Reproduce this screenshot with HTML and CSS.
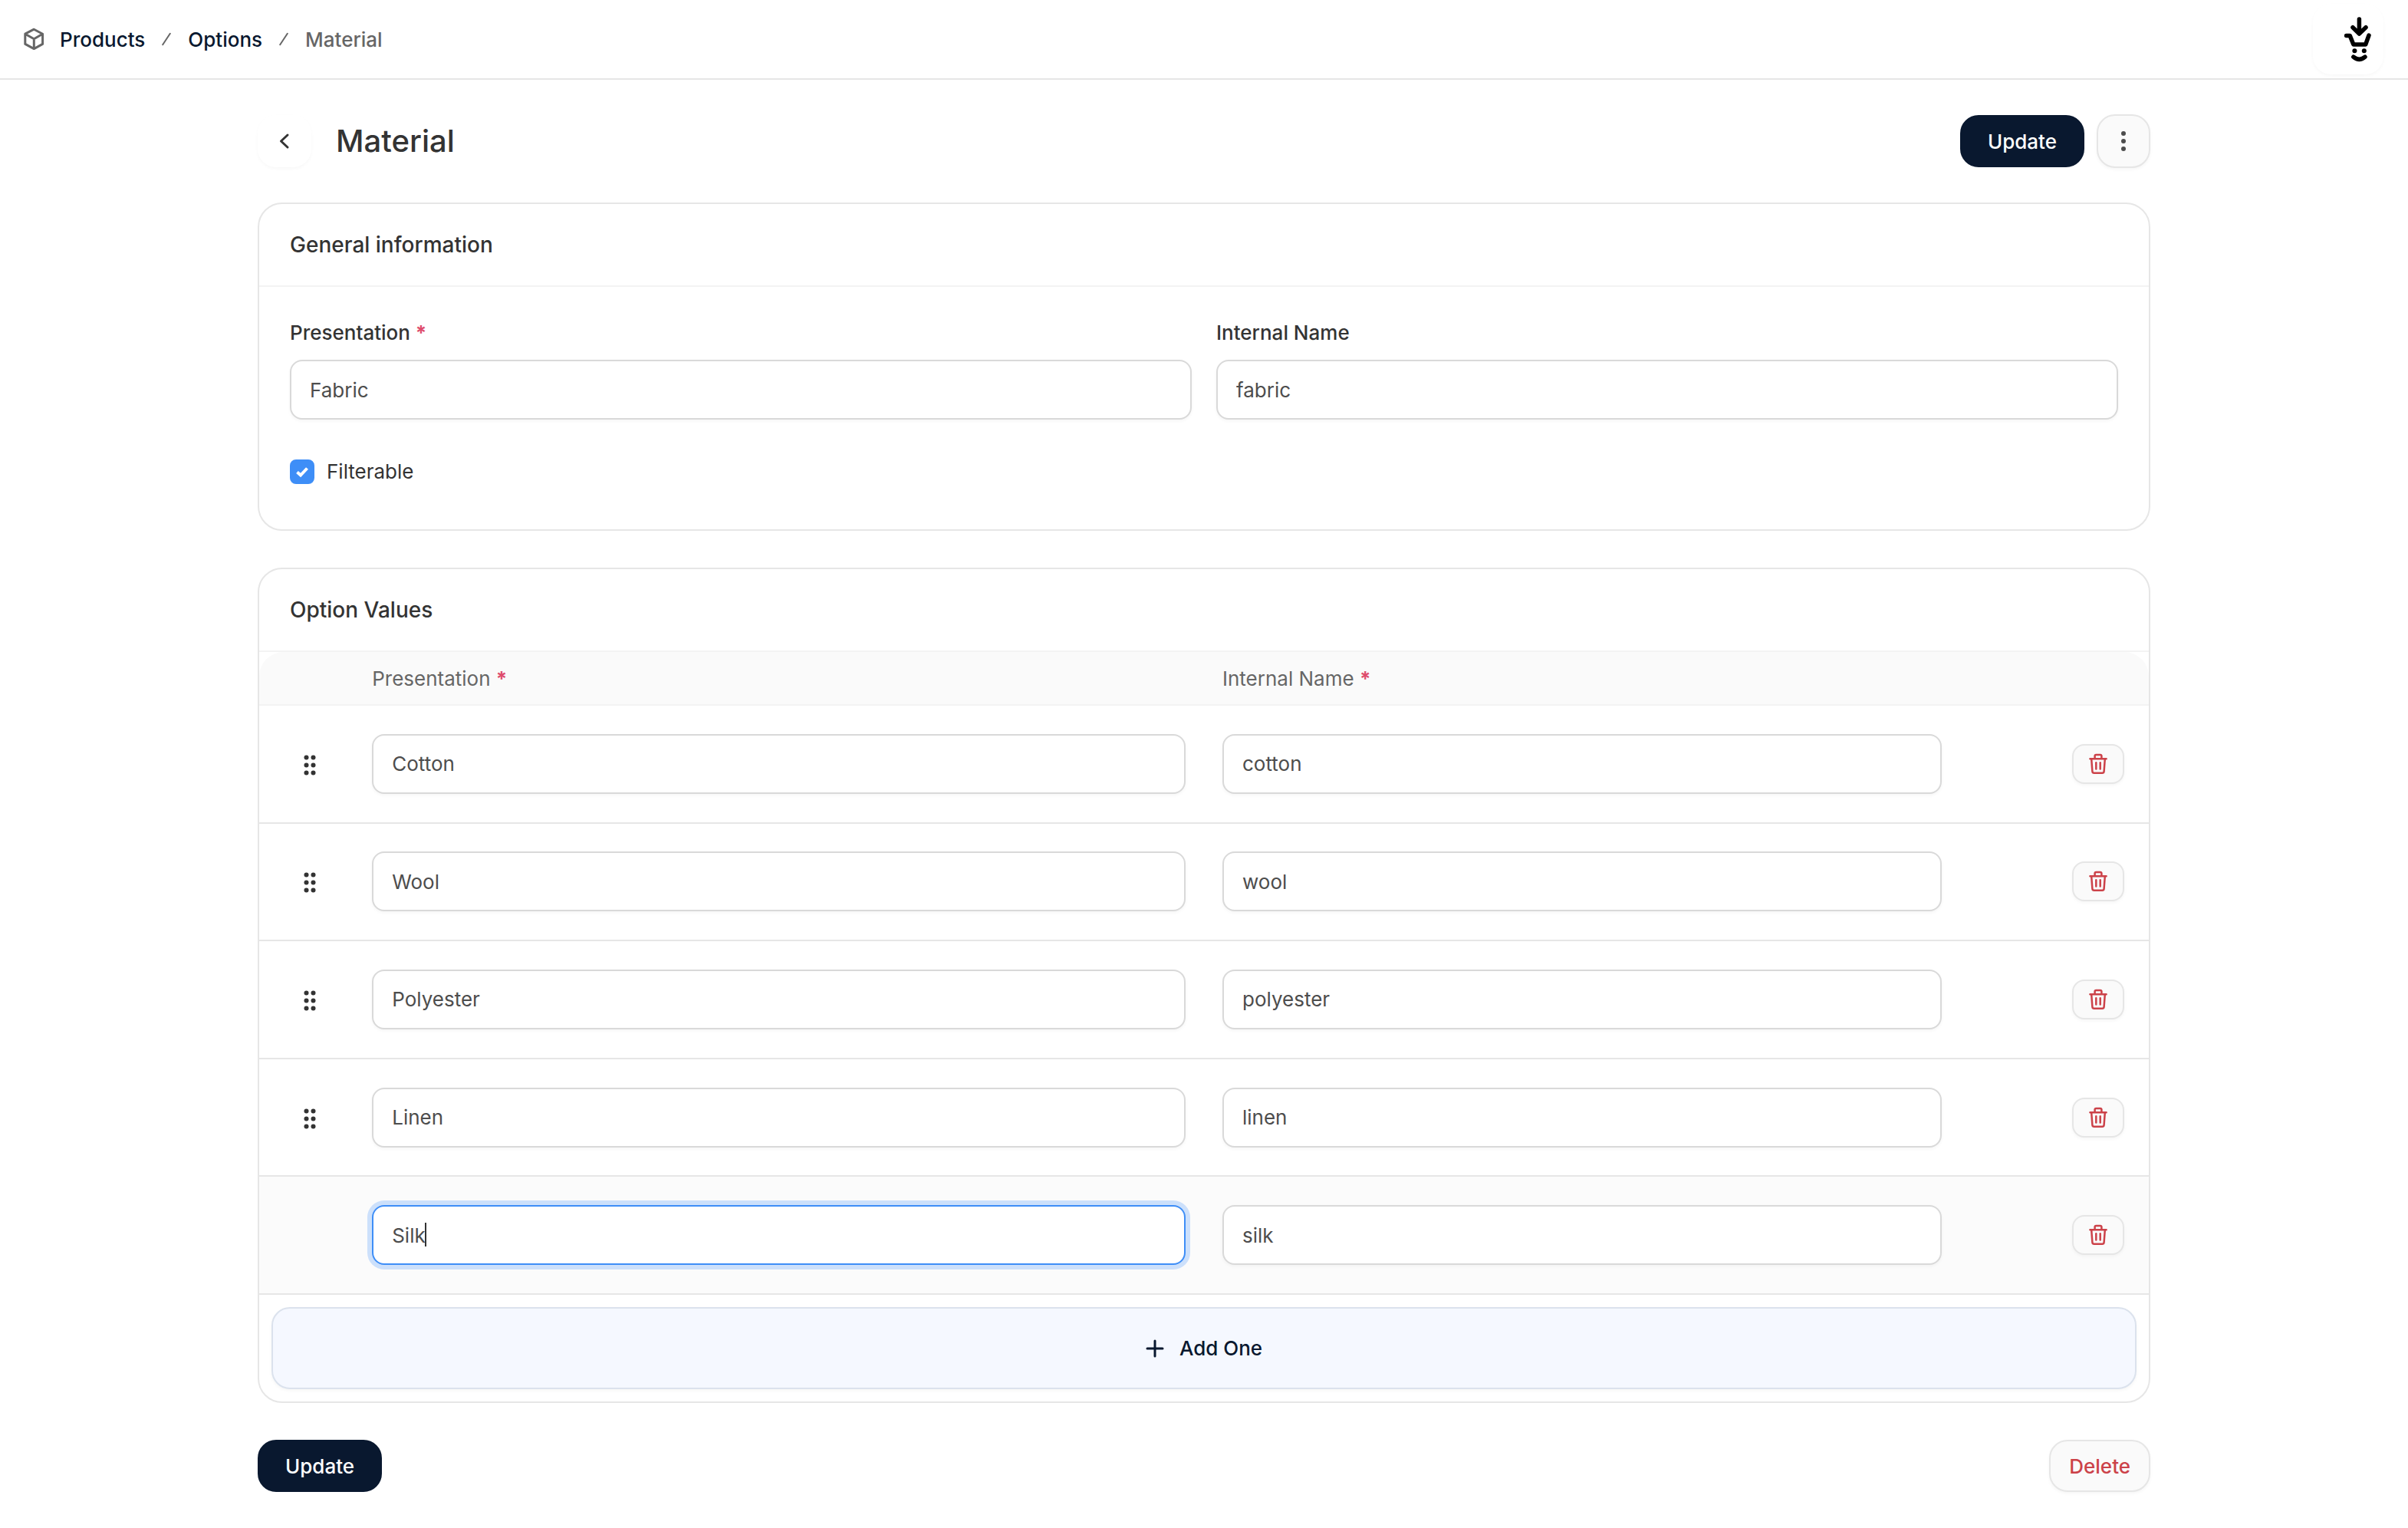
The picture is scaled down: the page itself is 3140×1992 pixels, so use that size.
FILE: index.html
```
<!DOCTYPE html>
<html lang="en">
<head>
  <meta charset="UTF-8" />
  <meta name="viewport" content="width=device-width, initial-scale=1.0" />
  <title>Material</title>
  <link rel="stylesheet" href="styles.css">
</head>
<body>
  <!-- shared icons -->
  <svg class="sprite" aria-hidden="true">
    <symbol id="icon-slash" viewBox="0 0 12 18">
      <path d="M1.2 16.2L10.8 1.8" />
    </symbol>
    <symbol id="icon-grip" viewBox="0 0 36 36">
      <circle cx="13.5" cy="9.5" r="3" /><circle cx="22.5" cy="9.5" r="3" />
      <circle cx="13.5" cy="19.5" r="3" /><circle cx="22.5" cy="19.5" r="3" />
      <circle cx="13.5" cy="29.5" r="3" /><circle cx="22.5" cy="29.5" r="3" />
    </symbol>
    <symbol id="icon-trash" viewBox="0 0 24 28">
      <path d="M1.4 7.3H22.6M7.6 7V3.6Q7.6 1.9 9.3 1.9H14.7Q16.4 1.9 16.4 3.6V7M3.2 7.5L4.4 23.6Q4.6 25.7 6.7 25.7H17.3Q19.4 25.7 19.6 23.6L20.8 7.5M9.3 12.2V20.4M14.7 12.2V20.4" />
    </symbol>
  </svg>

  <header class="topbar">
    <nav class="breadcrumbs" aria-label="Breadcrumb">
      <svg class="icon-box" width="28" height="30" viewBox="0 0 28 30">
        <path d="M14.3 2.2L25.6 8.2V21.4L14.3 27.6L2.8 21.4V8.2ZM2.8 8.2L14.3 14.8L25.6 8.2M14.3 14.8V27.6" />
      </svg>
      <a href="#">Products</a>
      <svg class="icon-slash" width="12" height="18"><use href="#icon-slash" /></svg>
      <a href="#">Options</a>
      <svg class="icon-slash" width="12" height="18"><use href="#icon-slash" /></svg>
      <span>Material</span>
    </nav>
    <button type="button" class="account" aria-label="Account">
      <svg width="40" height="60" viewBox="0 0 40 60">
        <path d="M20.4 4V22M12 14.7L20.4 23L29 14.7M3.6 25.4H8.2L12.9 37H28.7L33 25M12.8 53.2Q20.4 59.6 28 53.2" />
        <circle cx="14.4" cy="45.3" r="3" />
        <circle cx="26.8" cy="45.3" r="3" />
      </svg>
    </button>
  </header>

  <main class="container">
    <div class="page-header">
      <a href="#" class="back" aria-label="Back">
        <svg width="16" height="22" viewBox="0 0 16 22"><path d="M12 3L3.5 11L12 19" /></svg>
      </a>
      <h1>Material</h1>
      <button type="submit" form="option-form" class="btn btn-primary">Update</button>
      <button type="button" class="btn btn-light btn-more" aria-label="More actions">
        <svg width="8" height="28" viewBox="0 0 8 28">
          <circle cx="4" cy="4" r="3" /><circle cx="4" cy="14" r="3" /><circle cx="4" cy="24" r="3" />
        </svg>
      </button>
    </div>

    <form id="option-form">
      <section class="card">
        <h2 class="card-header">General information</h2>
        <div class="card-body">
          <div class="fields">
            <div class="field">
              <label for="presentation">Presentation <span class="required">*</span></label>
              <input type="text" id="presentation" class="input" value="Fabric" />
            </div>
            <div class="field">
              <label for="name">Internal Name</label>
              <input type="text" id="name" class="input" value="fabric" />
            </div>
          </div>
          <div class="check">
            <input type="checkbox" id="filterable" checked />
            <label for="filterable">Filterable</label>
          </div>
        </div>
      </section>

      <section class="card">
        <h2 class="card-header">Option Values</h2>
        <table class="values">
          <thead>
            <tr>
              <th class="col-handle"></th>
              <th class="col-presentation">Presentation <span class="required">*</span></th>
              <th class="col-name">Internal Name <span class="required">*</span></th>
              <th class="col-actions"></th>
            </tr>
          </thead>
          <tbody>
            <tr>
              <td class="handle"><svg width="36" height="36"><use href="#icon-grip" /></svg></td>
              <td><input type="text" class="input" value="Cotton" aria-label="Presentation" /></td>
              <td><input type="text" class="input" value="cotton" aria-label="Internal Name" /></td>
              <td class="actions"><button type="button" class="btn btn-light btn-trash" aria-label="Remove"><svg width="24" height="28"><use href="#icon-trash" /></svg></button></td>
            </tr>
            <tr>
              <td class="handle"><svg width="36" height="36"><use href="#icon-grip" /></svg></td>
              <td><input type="text" class="input" value="Wool" aria-label="Presentation" /></td>
              <td><input type="text" class="input" value="wool" aria-label="Internal Name" /></td>
              <td class="actions"><button type="button" class="btn btn-light btn-trash" aria-label="Remove"><svg width="24" height="28"><use href="#icon-trash" /></svg></button></td>
            </tr>
            <tr>
              <td class="handle"><svg width="36" height="36"><use href="#icon-grip" /></svg></td>
              <td><input type="text" class="input" value="Polyester" aria-label="Presentation" /></td>
              <td><input type="text" class="input" value="polyester" aria-label="Internal Name" /></td>
              <td class="actions"><button type="button" class="btn btn-light btn-trash" aria-label="Remove"><svg width="24" height="28"><use href="#icon-trash" /></svg></button></td>
            </tr>
            <tr>
              <td class="handle"><svg width="36" height="36"><use href="#icon-grip" /></svg></td>
              <td><input type="text" class="input" value="Linen" aria-label="Presentation" /></td>
              <td><input type="text" class="input" value="linen" aria-label="Internal Name" /></td>
              <td class="actions"><button type="button" class="btn btn-light btn-trash" aria-label="Remove"><svg width="24" height="28"><use href="#icon-trash" /></svg></button></td>
            </tr>
            <tr class="is-new">
              <td></td>
              <td>
                <div class="editing">
                  <input type="text" class="input is-focused" value="Silk" aria-label="Presentation" />
                  <span class="caret"></span>
                </div>
              </td>
              <td><input type="text" class="input" value="silk" aria-label="Internal Name" /></td>
              <td class="actions"><button type="button" class="btn btn-light btn-trash" aria-label="Remove"><svg width="24" height="28"><use href="#icon-trash" /></svg></button></td>
            </tr>
          </tbody>
        </table>
        <div class="card-footer">
          <button type="button" class="btn btn-add">
            <svg width="24" height="24" viewBox="0 0 24 24"><path d="M12 2V22M2 12H22" /></svg>
            Add One
          </button>
        </div>
      </section>

      <div class="form-actions">
        <button type="submit" class="btn btn-primary">Update</button>
        <button type="button" class="btn btn-light btn-delete">Delete</button>
      </div>
    </form>
  </main>
</body>
</html>
```
FILE: styles.css
```
* {
  box-sizing: border-box;
}

body {
  margin: 0;
  background: #fff;
  color: #333;
  font-family: Inter, "Liberation Sans", sans-serif;
  font-size: 26px;
  line-height: 39px;
}

svg {
  display: block;
  flex: none;
  fill: none;
  stroke-linecap: round;
  stroke-linejoin: round;
}

.sprite {
  position: absolute;
  width: 0;
  height: 0;
}

/* Top bar */
.topbar {
  display: flex;
  justify-content: space-between;
  align-items: center;
  height: 104px;
  padding: 0 32px 0 30px;
  border-bottom: 2px solid #e6e6e6;
}

.breadcrumbs {
  display: flex;
  align-items: center;
  gap: 22px;
  color: #666;
  font-weight: 500;
}

.breadcrumbs a {
  color: #09182f;
  text-decoration: none;
}

.icon-box {
  margin-right: -2px;
  stroke: #666;
  stroke-width: 3;
}

.icon-slash {
  stroke: #666;
  stroke-width: 2;
}

.account {
  display: flex;
  justify-content: flex-end;
  align-items: center;
  width: 92px;
  height: 92px;
  padding: 0 12px;
  border: none;
  border-radius: 24px;
  background: #fff;
  box-shadow: 0 2px 4px rgba(0, 0, 0, 0.03);
}

.account path {
  stroke: #000;
  stroke-width: 5.5;
}

.account circle {
  fill: #000;
}

/* Page */
.container {
  max-width: 2468px;
  margin: 0 auto;
  padding: 45px 0;
}

.page-header {
  display: flex;
  align-items: center;
  gap: 16px;
  margin-bottom: 45px;
}

.page-header h1 {
  flex: 1;
  margin: 0 0 0 16px;
  font-size: 40px;
  font-weight: 500;
  line-height: 48px;
}

.back {
  display: flex;
  justify-content: center;
  align-items: center;
  width: 70px;
  height: 68px;
  border-radius: 24px;
  box-shadow: 0 2px 4px rgba(0, 0, 0, 0.03);
}

.back svg {
  stroke: #333;
  stroke-width: 3;
}

/* Buttons */
.btn {
  display: flex;
  justify-content: center;
  align-items: center;
  height: 68px;
  border: 2px solid transparent;
  border-radius: 24px;
  font-family: inherit;
  font-size: 26px;
  font-weight: 500;
  line-height: 39px;
  cursor: pointer;
}

.btn-primary {
  padding: 0 34px;
  border-color: #09182f;
  background: #09182f;
  color: #fff;
}

.btn-light {
  border-color: #e6e6e6;
  background: #fafafa;
  box-shadow: 0 2px 4px rgba(0, 0, 0, 0.04);
}

.btn-more {
  width: 70px;
  height: 70px;
  padding: 0;
}

.btn-more svg {
  fill: #4d4d4d;
}

.btn-trash {
  width: 68px;
  height: 52px;
  padding: 0;
  border-radius: 16px;
}

.btn-trash svg {
  stroke: #cc4249;
  stroke-width: 2.5;
}

.btn-delete {
  padding: 0 24px;
  color: #cc4249;
}

.btn-add {
  gap: 20px;
  width: 100%;
  height: 107px;
  border-color: #dbe2ed;
  background: #f5f8ff;
  color: #09182f;
  box-shadow: 0 2px 4px rgba(0, 0, 0, 0.04);
}

.btn-add svg {
  stroke: #09182f;
  stroke-width: 3;
}

/* Cards */
.card {
  margin-bottom: 48px;
  border: 2px solid #e6e6e6;
  border-radius: 32px;
}

.card-header {
  margin: 0;
  padding: 32px 40px;
  border-bottom: 2px solid #f3f3f3;
  font-size: 28px;
  font-weight: 500;
  line-height: 42px;
}

.card-body {
  padding: 40px 40px 56px;
}

.card-footer {
  padding: 16px;
}

/* Fields */
.fields {
  display: grid;
  grid-template-columns: 1fr 1fr;
  gap: 32px;
  margin-bottom: 48px;
}

.field label {
  display: block;
  margin-bottom: 16px;
  font-weight: 500;
}

.required {
  color: #de4c6c;
  font-weight: 700;
}

.input {
  display: block;
  width: 100%;
  height: 78px;
  padding: 0 24px;
  border: 2px solid #d9d9d9;
  border-radius: 16px;
  background: #fff;
  box-shadow: 0 2px 4px rgba(0, 0, 0, 0.04);
  color: #4d4d4d;
  font-family: inherit;
  font-size: 26px;
  outline: none;
}

.input.is-focused,
.input:focus {
  border-color: #3e8ef7;
  box-shadow: 0 0 0 6px #cce0fb;
}

.check {
  display: flex;
  align-items: center;
  gap: 16px;
}

.check input {
  appearance: none;
  width: 32px;
  height: 32px;
  margin: 0;
  border: 2px solid #d9d9d9;
  border-radius: 8px;
}

.check input:checked {
  border-color: #3e8ef7;
  background: #3e8ef7 url("data:image/svg+xml,%3Csvg xmlns='http://www.w3.org/2000/svg' viewBox='0 0 32 32'%3E%3Cpath d='M9.5 16.5L14 20.5L22.5 11.5' fill='none' stroke='white' stroke-width='4'/%3E%3C/svg%3E") center / 32px 32px no-repeat;
}

/* Option values table */
.values {
  width: 100%;
  height: 838px;
  border-spacing: 0;
  table-layout: fixed;
}

.values th {
  height: 70px;
  padding: 0 24px;
  border-bottom: 2px solid #f3f3f3;
  background: #fafafa;
  color: #666;
  font-weight: 400;
  text-align: left;
}

.values th:first-child {
  border-top-left-radius: 32px;
}

.values th:last-child {
  border-top-right-radius: 32px;
}

.values td {
  padding: 0 24px;
  border-bottom: 2px solid #e6e6e6;
}

.col-handle {
  width: 5%;
}

.col-presentation {
  width: 45%;
}

.col-name {
  width: 40%;
}

.col-actions {
  width: 10%;
}

.values .handle {
  padding: 0 0 0 48px;
}

.handle svg {
  fill: #333;
}

.values .actions {
  padding: 0 32px;
}

.actions .btn {
  margin-left: auto;
}

.is-new td {
  background: #fbfbfb;
}

.editing {
  position: relative;
}

.caret {
  position: absolute;
  top: 23px;
  left: 69px;
  width: 2px;
  height: 31px;
  background: #333;
}

/* Bottom actions */
.form-actions {
  display: flex;
  justify-content: space-between;
}
```
